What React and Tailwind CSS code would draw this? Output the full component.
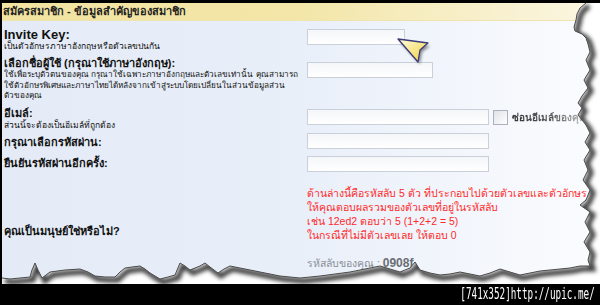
import React from "react";

const tear = [
  [586,3],[580,8],[577,14],[576,20],[574,27],[575,31],[582,34],[586,38],[588,44],[590,52],[586,60],[590,70],[584,80],[588,88],[582,96],[578,103],[582,108],[578,115],[586,125],[590,133],[585,142],[590,150],[584,160],[588,170],[583,180],[590,190],[586,200],[580,205],[590,212],[585,222],[590,232],[584,242],[590,252],[588,260],[590,266],
  [580,266],[570,268],[560,269],[550,270],[540,271],[530,273],[520,275],[510,272],[500,269],[490,273],[480,276],[470,274],[460,272],[450,274],[440,275],[430,273],[420,270],[415,262],[410,268],[400,272],[390,269],[380,266],[365,269],[350,272],[335,274],[320,276],[300,278],[290,277],[280,276],[270,274],[260,272],[250,270],[240,268],[230,266],[224,269],[218,273],[210,267],[205,263],[200,266],[190,270],[185,266],[180,263],[175,275],[168,277],[160,279],[155,276],[150,273],[145,269],[140,266],[132,267],[125,268],[120,272],[115,277],[105,277],[95,276],[88,272],[80,269],[65,270],[50,272],[42,278],[38,270],[35,263],[32,270],[30,277],[20,278],[10,279],[2,278]
];

const tearStr = tear.map(p => p.join(",")).join(" ");
const outside = "M600,3 L" + tear.map(p => p.join(",")).join(" L") + " L2,284 L600,284 Z";

const FONT = { fontFamily: '"Liberation Sans", "DejaVu Sans", "Noto Sans", Tahoma, sans-serif' };

function Input({ w }) {
  return (
    <div
      className={`h-[16px] ${w} border border-[#c9d0da] bg-gradient-to-b from-[#f4f6f9] to-white`}
    />
  );
}

const label = "text-[11px] font-bold text-[#111] leading-[14px] whitespace-nowrap";
const desc = "text-[8.5px] text-[#111] leading-[11px] whitespace-nowrap";

export default function App() {
  return (
    <div className="relative w-[600px] h-[305px] bg-black overflow-hidden" style={FONT}>
      <div className="flex flex-col pt-[3px] pl-[2px] h-[284px]">
        <div className="flex-1 flex flex-col bg-gradient-to-r from-[#e4ebf7] via-[#e9eff9] to-[#fbfcfe]">
          {/* header */}
          <div className="h-[18px] flex items-center pl-[1px] bg-gradient-to-r from-[#f2e3a0] via-[#f3e6a8] to-[#fbf6e2] border-b border-[#efe3b0]">
            <span className="text-[11px] font-bold text-[#222] leading-none">สมัครสมาชิก - ข้อมูลสำคัญของสมาชิก</span>
          </div>

          <div className="flex flex-col pl-[2px] pt-[7px]">
            {/* Invite key */}
            <div className="flex">
              <div className="w-[303px]">
                <div className="text-[13px] font-bold text-[#111] leading-[13px]">Invite Key:</div>
                <div className={desc}>เป็นตัวอักษรภาษาอังกฤษหรือตัวเลขปนกัน</div>
              </div>
              <div className="pt-[1px]"><Input w="w-[98px]" /></div>
            </div>

            {/* username */}
            <div className="flex mt-[4px]">
              <div className="w-[303px]">
                <div className={label}>เลือกชื่อผู้ใช้ (กรุณาใช้ภาษาอังกฤษ):</div>
                <div className="text-[8.2px] text-[#111] leading-[10.5px] whitespace-nowrap">
                  ใช้เพื่อระบุตัวตนของคุณ กรุณาใช้เฉพาะภาษาอังกฤษและตัวเลขเท่านั้น คุณสามารถ<br />
                  ใช้ตัวอักษรพิเศษและภาษาไทยได้หลังจากเข้าสู่ระบบโดยเปลี่ยนในส่วนข้อมูลส่วน<br />
                  ตัวของคุณ
                </div>
              </div>
              <div className="pt-[6px]"><Input w="w-[126px]" /></div>
            </div>

            {/* email */}
            <div className="flex mt-[4px]">
              <div className="w-[303px]">
                <div className={label}>อีเมล์:</div>
                <div className={desc}>ส่วนนี้จะต้องเป็นอีเมล์ที่ถูกต้อง</div>
              </div>
              <div className="pt-[3px] flex items-start">
                <Input w="w-[182px]" />
                <div className="ml-[4px] mt-[1px] w-[15px] h-[15px] border border-[#a9b1bd] bg-gradient-to-br from-[#dfe2e7] to-white" />
                <span className="ml-[4px] mt-[2px] text-[10px] font-bold leading-[14px] bg-gradient-to-r from-[#333] via-[#555] to-[#c8c8c8] bg-clip-text text-transparent">ซ่อนอีเมล์ของคุณ</span>
              </div>
            </div>

            {/* password */}
            <div className="flex mt-[2px] items-start">
              <div className="w-[303px] pt-[2px]">
                <div className={label}>กรุณาเลือกรหัสผ่าน:</div>
              </div>
              <Input w="w-[182px]" />
            </div>

            {/* confirm */}
            <div className="flex mt-[7px] items-start">
              <div className="w-[303px]">
                <div className={label}>ยืนยันรหัสผ่านอีกครั้ง:</div>
              </div>
              <Input w="w-[182px]" />
            </div>

            {/* captcha */}
            <div className="flex mt-[14px]">
              <div className="w-[303px] flex flex-col justify-end pb-[4px]">
                <div className={label}>คุณเป็นมนุษย์ใช่หรือไม่?</div>
              </div>
              <div className="text-[10.5px] text-[#ff2a2a] leading-[14px] whitespace-nowrap">
                <div>ด้านล่างนี้คือรหัสลับ 5 ตัว ที่ประกอบไปด้วยตัวเลขและตัวอักษร</div>
                <div>ให้คุณตอบผลรวมของตัวเลขที่อยู่ในรหัสลับ</div>
                <div>เช่น 12ed2 ตอบว่า 5 (1+2+2 = 5)</div>
                <div>ในกรณีที่ไม่มีตัวเลขเลย ให้ตอบ 0</div>
              </div>
            </div>

            <div className="flex mt-[14px]">
              <div className="w-[303px]" />
              <div className="text-[10.5px] text-[#8a8f98] leading-[14px] whitespace-nowrap">
                รหัสลับของคุณ : <span className="font-bold text-[12px] text-[#6a6e75]">0908f</span>
              </div>
            </div>
          </div>
        </div>
      </div>

      {/* black strip caption */}
      <div className="h-[21px] flex items-center justify-end pr-[5px]">
        <span
          className="text-white text-[15px] leading-none origin-right scale-x-[0.62] whitespace-nowrap"
          style={{ fontFamily: '"DejaVu Sans Mono", "Liberation Mono", monospace' }}
        >
          [741x352]http://upic.me/
        </span>
      </div>

      {/* torn paper edge + cursor overlay */}
      <svg className="absolute left-0 top-0" width="600" height="305" viewBox="0 0 600 305">
        <defs>
          <clipPath id="out">
            <path d={outside} />
          </clipPath>
          <filter id="blur" x="-10%" y="-10%" width="120%" height="120%">
            <feGaussianBlur stdDeviation="2.2" />
          </filter>
          <filter id="cshadow" x="-50%" y="-50%" width="200%" height="200%">
            <feGaussianBlur stdDeviation="1.5" />
          </filter>
          <linearGradient id="cur" x1="0" y1="0" x2="1" y2="1">
            <stop offset="0" stopColor="#fffbe0" />
            <stop offset="0.6" stopColor="#f6e27a" />
            <stop offset="1" stopColor="#e9c94a" />
          </linearGradient>
        </defs>
        <path d={outside} fill="#ffffff" />
        <g clipPath="url(#out)">
          <polyline points={tearStr} fill="none" stroke="#000" strokeOpacity="0.8" strokeWidth="5" transform="translate(3,3)" filter="url(#blur)" />
        </g>
        <polyline points={tearStr} fill="none" stroke="#4a4a4a" strokeWidth="1" strokeLinejoin="round" />

        {/* cursor */}
        <polygon points="400,42 430,46 422,52 420,64" fill="#000" opacity="0.45" filter="url(#cshadow)" />
        <polygon points="398,39 428,43 420,50 418,62" fill="url(#cur)" stroke="#3b3a78" strokeWidth="1.3" strokeLinejoin="round" />
      </svg>
    </div>
  );
}
